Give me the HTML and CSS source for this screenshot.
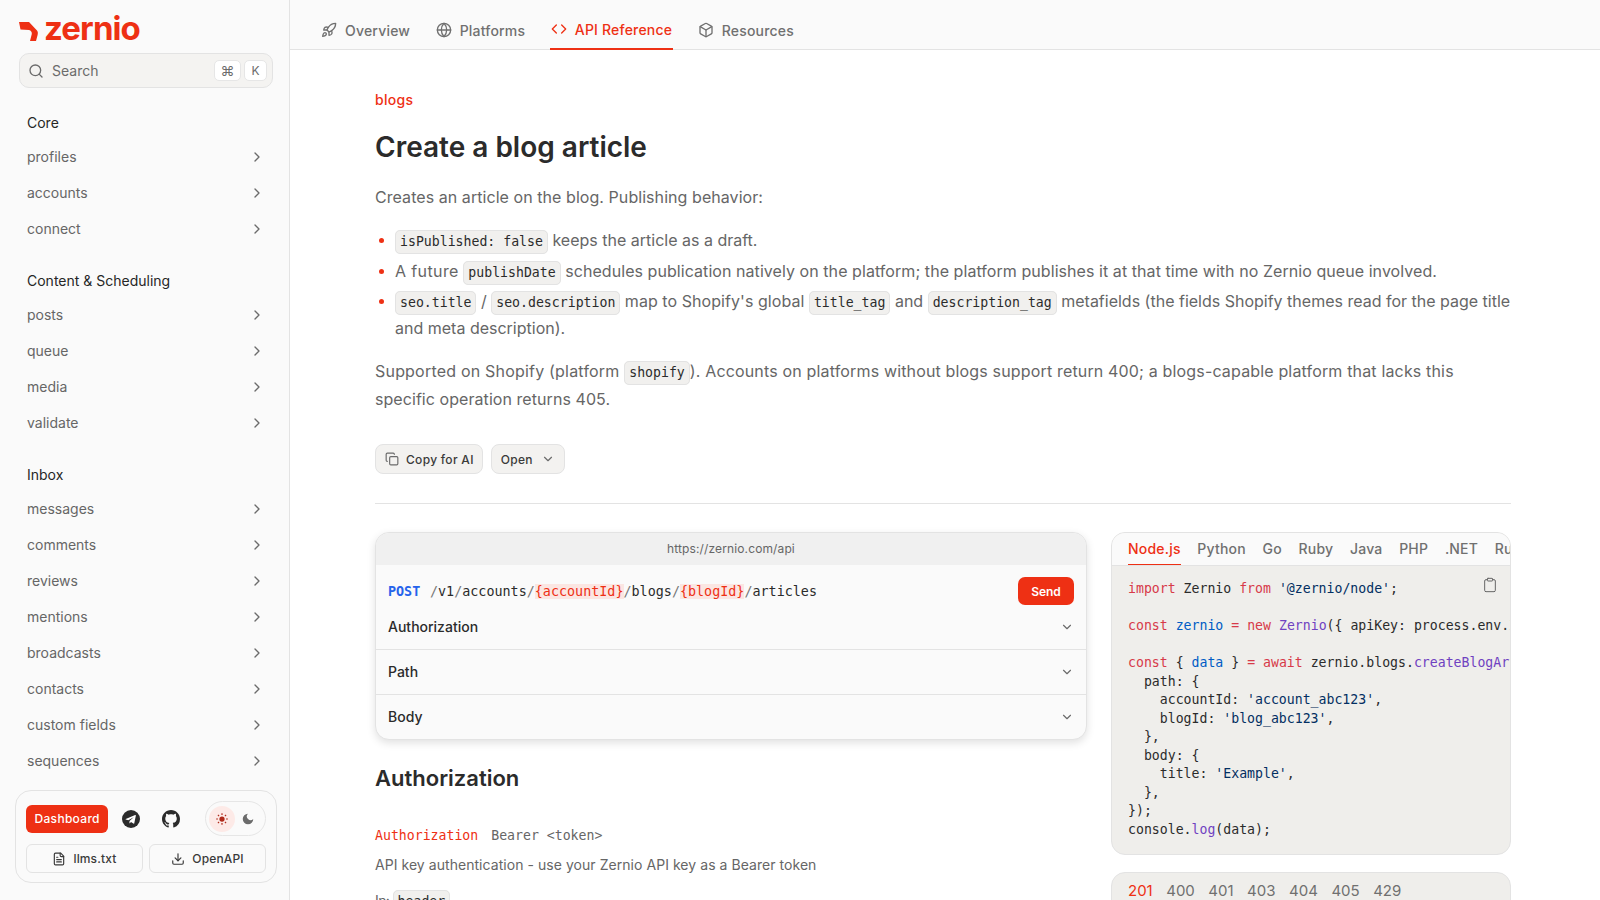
FILE: index.html
```html
<!DOCTYPE html>
<html lang="en">
<head>
    <meta charset="UTF-8">
    <title>Create a blog article</title>
    <link rel="stylesheet" href="styles.css">
</head>
<body>
    <!-- Shared icons -->
    <svg class="sprite" aria-hidden="true">
        <symbol id="chev-right" viewBox="0 0 24 24"><path d="m9 18 6-6-6-6"/></symbol>
        <symbol id="chev-down" viewBox="0 0 24 24"><path d="m6 9 6 6 6-6"/></symbol>
    </svg>

    <div class="page">
        <!-- Sidebar -->
        <aside class="sidebar">
            <div class="logo">
                <svg class="logo-mark" viewBox="0 0 19 19"><path d="M0 0h10l8 8.500c1 1.500 1 2.500.6 4.500L17 19h-6l1.800-7c.2-2-.8-3.500-2.800-4l-8.500-.5z"/></svg>
                <span class="logo-text">zernio</span>
            </div>
            <div class="search">
                <svg class="icon search-icon" viewBox="0 0 24 24"><circle cx="11" cy="11" r="8"/><path d="m21 21-4.300-4.300"/></svg>
                <span class="search-label">Search</span>
                <kbd class="key key-cmd">⌘</kbd>
                <kbd class="key">K</kbd>
            </div>

            <nav class="side-nav">
                <div class="side-title">Core</div>
                <a class="side-item">profiles<svg class="chev"><use href="#chev-right"/></svg></a>
                <a class="side-item">accounts<svg class="chev"><use href="#chev-right"/></svg></a>
                <a class="side-item">connect<svg class="chev"><use href="#chev-right"/></svg></a>

                <div class="side-title">Content &amp; Scheduling</div>
                <a class="side-item">posts<svg class="chev"><use href="#chev-right"/></svg></a>
                <a class="side-item">queue<svg class="chev"><use href="#chev-right"/></svg></a>
                <a class="side-item">media<svg class="chev"><use href="#chev-right"/></svg></a>
                <a class="side-item">validate<svg class="chev"><use href="#chev-right"/></svg></a>

                <div class="side-title">Inbox</div>
                <a class="side-item">messages<svg class="chev"><use href="#chev-right"/></svg></a>
                <a class="side-item">comments<svg class="chev"><use href="#chev-right"/></svg></a>
                <a class="side-item">reviews<svg class="chev"><use href="#chev-right"/></svg></a>
                <a class="side-item">mentions<svg class="chev"><use href="#chev-right"/></svg></a>
                <a class="side-item">broadcasts<svg class="chev"><use href="#chev-right"/></svg></a>
                <a class="side-item">contacts<svg class="chev"><use href="#chev-right"/></svg></a>
                <a class="side-item">custom fields<svg class="chev"><use href="#chev-right"/></svg></a>
                <a class="side-item">sequences<svg class="chev"><use href="#chev-right"/></svg></a>
            </nav>

            <div class="side-card">
                <div class="card-row">
                    <a class="dash-btn">Dashboard</a>
                    <svg class="brand brand-tg" viewBox="0 0 16 16"><circle cx="8" cy="8" r="8" fill="#2b2b2b"/><path fill="#fff" d="M3.300 7.900 11.700 4.500c.4-.1.700.1.600.600l-1.400 6.600c-.1.500-.4.600-.8.400L8 10.700l-1 1c-.2.200-.4.200-.4-.1l.1-1.800 3.400-3.100c.2-.2 0-.2-.2-.1L5.600 9.100 3.400 8.400c-.4-.1-.4-.4-.1-.5z"/></svg>
                    <svg class="brand brand-gh" viewBox="0 0 16 16"><path fill="#2b2b2b" d="M8 0C3.580 0 0 3.580 0 8c0 3.540 2.290 6.530 5.470 7.590.4.070.55-.17.55-.38 0-.19-.01-.82-.01-1.490-2.010.37-2.530-.49-2.690-.94-.09-.23-.48-.94-.82-1.130-.28-.15-.68-.52-.01-.53.63-.01 1.080.58 1.230.82.72 1.210 1.870.87 2.330.66.07-.52.28-.87.51-1.070-1.780-.2-3.640-.89-3.640-3.950 0-.87.31-1.590.82-2.150-.08-.2-.36-1.020.08-2.120 0 0 .67-.21 2.200.82.64-.18 1.320-.27 2-.27s1.360.09 2 .27c1.530-1.040 2.200-.82 2.200-.82.44 1.100.16 1.920.08 2.120.51.56.82 1.270.82 2.150 0 3.070-1.870 3.750-3.650 3.950.29.25.54.73.54 1.480 0 1.070-.01 1.930-.01 2.200 0 .21.15.46.55.38A8.010 8.010 0 0 0 16 8c0-4.420-3.580-8-8-8"/></svg>
                    <div class="theme-toggle">
                        <span class="theme-sun">
                            <svg viewBox="0 0 24 24"><circle cx="12" cy="12" r="4.500" fill="#b02a1a" stroke="none"/><path d="M12 2v3M12 19v3M2 12h3M19 12h3M5 5l2 2M17 17l2 2M5 19l2-2M17 7l2-2"/></svg>
                        </span>
                        <svg class="theme-moon" viewBox="0 0 24 24"><path d="M12 3a6 6 0 0 0 9 9 9 9 0 1 1-9-9z"/></svg>
                    </div>
                </div>
                <div class="card-row card-links">
                    <a class="link-btn">
                        <svg class="icon" viewBox="0 0 24 24"><path d="M15 2H6a2 2 0 0 0-2 2v16a2 2 0 0 0 2 2h12a2 2 0 0 0 2-2V7Z"/><path d="M14 2v4a2 2 0 0 0 2 2h4"/><path d="M10 9H8"/><path d="M16 13H8"/><path d="M16 17H8"/></svg>
                        llms.txt
                    </a>
                    <a class="link-btn">
                        <svg class="icon" viewBox="0 0 24 24"><path d="M21 15v4a2 2 0 0 1-2 2H5a2 2 0 0 1-2-2v-4"/><path d="m7 10 5 5 5-5"/><path d="M12 15V3"/></svg>
                        OpenAPI
                    </a>
                </div>
            </div>
        </aside>

        <div class="main">
            <!-- Top tabs -->
            <header class="topnav">
                <a class="top-tab">
                    <svg class="icon" viewBox="0 0 24 24"><path d="M4.500 16.500c-1.500 1.260-2 5-2 5s3.740-.5 5-2c.71-.84.7-2.130-.09-2.910a2.180 2.180 0 0 0-2.910-.09z"/><path d="m12 15-3-3a22 22 0 0 1 2-3.950A12.880 12.880 0 0 1 22 2c0 2.720-.78 7.500-6 11a22.350 22.350 0 0 1-4 2z"/><path d="M9 12H4s.55-3.030 2-4c1.620-1.080 5 0 5 0"/><path d="M12 15v5s3.030-.55 4-2c1.080-1.620 0-5 0-5"/></svg>
                    Overview
                </a>
                <a class="top-tab">
                    <svg class="icon" viewBox="0 0 24 24"><circle cx="12" cy="12" r="10"/><path d="M12 2a14.500 14.500 0 0 0 0 20 14.500 14.500 0 0 0 0-20"/><path d="M2 12h20"/></svg>
                    Platforms
                </a>
                <a class="top-tab active">
                    <svg class="icon" viewBox="0 0 24 24"><path d="m16 18 6-6-6-6"/><path d="m8 6-6 6 6 6"/></svg>
                    API Reference
                </a>
                <a class="top-tab">
                    <svg class="icon" viewBox="0 0 24 24"><path d="M21 8a2 2 0 0 0-1-1.730l-7-4a2 2 0 0 0-2 0l-7 4A2 2 0 0 0 3 8v8a2 2 0 0 0 1 1.730l7 4a2 2 0 0 0 2 0l7-4A2 2 0 0 0 21 16Z"/><path d="m3.300 7 8.700 5 8.700-5"/><path d="M12 22V12"/></svg>
                    Resources
                </a>
            </header>

            <main class="content">
                <div class="eyebrow">blogs</div>
                <h1>Create a blog article</h1>
                <p class="lead">Creates an article on the blog. Publishing behavior:</p>
                <ul class="notes">
                    <li><code>isPublished: false</code> keeps the article as a draft.</li>
                    <li class="wide"><span class="wider">A future</span> <code>publishDate</code> schedules publication natively on the platform; the platform publishes it at that time with no Zernio queue involved.</li>
                    <li><code>seo.title</code> / <code>seo.description</code> <span class="wide">map to Shopify's global</span> <code>title_tag</code> and <code>description_tag</code> metafields (the fields Shopify themes read for the page title<br>and meta description).</li>
                </ul>
                <p class="support"><span class="support-start">Supported on Shopify (platform</span> <code>shopify</code>). Accounts on platforms without blogs support return 400; a blogs-capable platform that lacks this<br><span class="support-end">specific operation returns 405.</span></p>

                <div class="actions">
                    <button class="action-btn">
                        <svg class="icon" viewBox="0 0 24 24"><rect x="8" y="8" width="14" height="14" rx="2"/><path d="M4 16c-1.100 0-2-.9-2-2V4c0-1.100.9-2 2-2h10c1.100 0 2 .9 2 2"/></svg>
                        Copy for AI
                    </button>
                    <button class="action-btn open-btn">
                        Open
                        <svg class="chev-sm"><use href="#chev-down"/></svg>
                    </button>
                </div>
                <hr class="rule">

                <div class="columns">
                    <section class="col-left">
                        <div class="api-card">
                            <div class="api-url">https://zernio.com/api</div>
                            <div class="api-route">
                                <span class="method">POST</span>
                                <span class="route"><i>/</i>v1<i>/</i>accounts<i>/</i><b>{accountId}</b><i>/</i>blogs<i>/</i><b>{blogId}</b><i>/</i>articles</span>
                                <button class="send-btn">Send</button>
                            </div>
                            <div class="api-row first">Authorization<svg class="chev-sm"><use href="#chev-down"/></svg></div>
                            <div class="api-row">Path<svg class="chev-sm"><use href="#chev-down"/></svg></div>
                            <div class="api-row">Body<svg class="chev-sm"><use href="#chev-down"/></svg></div>
                        </div>

                        <h2>Authorization</h2>
                        <div class="param">
                            <span class="param-name">Authorization</span>
                            <span class="param-type">Bearer &lt;token&gt;</span>
                        </div>
                        <p class="param-desc">API key authentication - use your Zernio API key as a Bearer token</p>
                        <p class="param-in">In: <code>header</code></p>
                    </section>

                    <section class="col-right">
                        <div class="code-card">
                            <div class="code-tabs">
                                <span class="code-tab active">Node.js</span>
                                <span class="code-tab">Python</span>
                                <span class="code-tab">Go</span>
                                <span class="code-tab">Ruby</span>
                                <span class="code-tab">Java</span>
                                <span class="code-tab">PHP</span>
                                <span class="code-tab">.NET</span>
                                <span class="code-tab">Rust</span>
                            </div>
                            <div class="code-body">
                                <svg class="icon copy-code" viewBox="0 0 24 24"><rect x="8" y="2" width="8" height="4" rx="1"/><path d="M16 4h2a2 2 0 0 1 2 2v14a2 2 0 0 1-2 2H6a2 2 0 0 1-2-2V6a2 2 0 0 1 2-2h2"/></svg>
<pre><span class="kw">import</span> Zernio <span class="kw">from</span> <span class="str">'@zernio/node'</span>;

<span class="kw">const</span> <span class="var">zernio</span> <span class="kw">=</span> <span class="kw">new</span> <span class="fn">Zernio</span>({ apiKey: process.env.ZERNIO_API_KEY });

<span class="kw">const</span> { <span class="var">data</span> } <span class="kw">=</span> <span class="kw">await</span> zernio.blogs.<span class="fn">createBlogArticle</span>({
  path: {
    accountId: <span class="str">'account_abc123'</span>,
    blogId: <span class="str">'blog_abc123'</span>,
  },
  body: {
    title: <span class="str">'Example'</span>,
  },
});
console.<span class="fn">log</span>(data);</pre>
                            </div>
                        </div>

                        <div class="resp-card">
                            <span class="resp-tab active">201</span>
                            <span class="resp-tab">400</span>
                            <span class="resp-tab">401</span>
                            <span class="resp-tab">403</span>
                            <span class="resp-tab">404</span>
                            <span class="resp-tab">405</span>
                            <span class="resp-tab">429</span>
                        </div>
                    </section>
                </div>
            </main>
        </div>
    </div>
</body>
</html>
```

FILE: styles.css
```css
/* General */
* {
    box-sizing: border-box;
}

html, body {
    margin: 0;
    height: 900px;
    overflow: hidden;
}

body {
    font-family: Inter, 'Noto Sans', sans-serif;
    color: #666;
    background: #fafafa;
}

.sprite {
    display: none;
}

.page {
    display: flex;
    height: 900px;
}

.icon {
    width: 16px;
    height: 16px;
    flex: none;
    fill: none;
    stroke: currentColor;
    stroke-width: 2;
    stroke-linecap: round;
    stroke-linejoin: round;
}

/* Sidebar */
.sidebar {
    width: 290px;
    flex: none;
    display: flex;
    flex-direction: column;
    padding: 15px 0 0;
    background: #fafafa;
    border-right: 1px solid #e3e3e3;
}

.logo {
    display: flex;
    align-items: flex-end;
    gap: 6px;
    height: 28px;
    padding-left: 19px;
}

.logo-mark {
    width: 19px;
    height: 19px;
    margin-bottom: 2px;
    fill: #ee3014;
}

.logo-text {
    font-size: 33px;
    font-weight: 700;
    line-height: 28px;
    letter-spacing: -0.9px;
    color: #ee3014;
    position: relative;
    top: -1px;
}

.search {
    display: flex;
    align-items: center;
    height: 35px;
    margin: 10px 16px 0 19px;
    padding: 0 5px 0 8px;
    font-size: 14px;
    color: #6b6b6b;
    background: #f4f3f1;
    border: 1px solid #e3e3e3;
    border-radius: 10px;
}

.search-label {
    flex: 1;
    margin-left: 8px;
}

.key {
    display: flex;
    align-items: center;
    justify-content: center;
    width: 23px;
    height: 21px;
    font-family: Inter, sans-serif;
    font-size: 12px;
    background: #fff;
    border: 1px solid #e6e6e6;
    border-radius: 5px;
}

.key-cmd {
    width: 27px;
    margin-right: 3px;
    font-size: 14px;
}

.side-nav {
    flex: 1;
    padding: 16px 0 0 27px;
    overflow: hidden;
}

.side-title {
    display: flex;
    align-items: center;
    height: 34px;
    margin-top: 16px;
    padding-top: 3px;
    font-size: 14px;
    color: #262626;
}

.side-title:first-child {
    margin-top: 0;
}

.side-item {
    display: flex;
    align-items: center;
    justify-content: space-between;
    height: 36px;
    padding: 0 24px 0 0;
    font-size: 14px;
    color: #666;
}

.chev {
    width: 16px;
    height: 16px;
    margin-top: 1px;
    fill: none;
    stroke: #6b6b6b;
    stroke-width: 2;
    stroke-linecap: round;
    stroke-linejoin: round;
}

.side-card {
    flex: none;
    width: 262px;
    height: 93px;
    margin: 0 0 17px 15px;
    padding: 10px 10px 0;
    background: #fafafa;
    border: 1px solid #e3e3e3;
    border-radius: 16px;
}

.card-row {
    display: flex;
    align-items: center;
}

.dash-btn {
    width: 83px;
    height: 28px;
    font-size: 12px;
    font-weight: 500;
    line-height: 28px;
    letter-spacing: 0.3px;
    text-align: center;
    color: #fff;
    background: #ee3014;
    border-radius: 6px;
}

.brand {
    width: 18px;
    height: 18px;
    flex: none;
}

.brand-tg {
    margin-left: 14px;
}

.brand-gh {
    margin-left: 22px;
}

.theme-toggle {
    display: flex;
    align-items: center;
    width: 61px;
    height: 35px;
    margin-left: 25px;
    padding-left: 3px;
    border: 1px solid #e6e6e6;
    border-radius: 18px;
}

.theme-sun {
    display: flex;
    align-items: center;
    justify-content: center;
    width: 26px;
    height: 26px;
    background: #fdeae7;
    border-radius: 50%;
}

.theme-sun svg {
    width: 14px;
    height: 14px;
    fill: none;
    stroke: #b02a1a;
    stroke-width: 2;
}

.theme-moon {
    width: 14px;
    height: 14px;
    margin-left: 6px;
    fill: #6b6b6b;
}

.card-links {
    gap: 6px;
    margin-top: 8px;
}

.link-btn {
    display: flex;
    align-items: center;
    justify-content: center;
    gap: 7px;
    width: 117px;
    height: 29px;
    font-size: 12px;
    font-weight: 500;
    letter-spacing: 0.15px;
    color: #3a3a3a;
    border: 1px solid #e3e3e3;
    border-radius: 6px;
}

.link-btn .icon {
    width: 14px;
    height: 14px;
}

/* Top tabs */
.main {
    flex: 1;
    min-width: 0;
    display: flex;
    flex-direction: column;
}

.topnav {
    flex: none;
    display: flex;
    gap: 23.5px;
    height: 50px;
    padding-left: 30px;
    background: #fafafa;
    border-bottom: 1px solid #e3e3e3;
}

.top-tab {
    display: flex;
    align-items: center;
    gap: 8px;
    height: 50px;
    padding: 10px 1px 0;
    font-size: 14px;
    font-weight: 500;
    letter-spacing: 0.2px;
    color: #707070;
}

.top-tab.active {
    color: #ee3014;
    border-bottom: 2px solid #ee3014;
}

/* Article */
.content {
    flex: 1;
    overflow: hidden;
    padding: 40px 89px 0 85px;
    background: #fff;
}

.eyebrow {
    font-size: 14px;
    font-weight: 500;
    line-height: 20px;
    letter-spacing: 0.3px;
    color: #ee3014;
}

h1 {
    margin: 19px 0 0;
    font-size: 28px;
    font-weight: 600;
    line-height: 36px;
    color: #2b2b2b;
}

.lead {
    margin: 18px 0 0;
    font-size: 16px;
    line-height: 28px;
    letter-spacing: 0.06px;
}

.notes {
    margin: 16px 0 0;
    padding: 0 0 0 20px;
    font-size: 16px;
    line-height: 27px;
    list-style: none;
}

.notes li {
    position: relative;
    margin-bottom: 3px;
}

.notes li:first-child {
    margin-bottom: 4px;
}

.notes .wide {
    letter-spacing: 0.06px;
}

.notes .wider {
    letter-spacing: 0.38px;
}

.notes li::before {
    content: "";
    position: absolute;
    left: -16px;
    top: 11px;
    width: 5px;
    height: 5px;
    background: #ee3014;
    border-radius: 50%;
}

code {
    padding: 3px 4px 4px;
    font-family: 'DejaVu Sans Mono', 'Liberation Mono', monospace;
    font-size: 13.2px;
    line-height: 18px;
    letter-spacing: 0;
    color: #2b2b2b;
    background: #f1f0ee;
    border: 1px solid #e3e3e3;
    border-radius: 5px;
}

.support {
    margin: 15px 0 0;
    font-size: 16px;
    line-height: 28px;
    letter-spacing: 0.16px;
}

.support-start {
    letter-spacing: 0.2px;
}

.support-end {
    letter-spacing: 0.06px;
}

.actions {
    display: flex;
    gap: 8px;
    margin-top: 31px;
}

.action-btn {
    display: flex;
    align-items: center;
    gap: 7px;
    height: 30px;
    padding: 0 8px 0 9px;
    font-family: inherit;
    font-size: 12px;
    font-weight: 500;
    letter-spacing: 0.3px;
    color: #3a3a3a;
    background: #f3f2f0;
    border: 1px solid #e3e3e3;
    border-radius: 8px;
}

.action-btn .icon {
    width: 14px;
    height: 14px;
    color: #6b6b6b;
}

.open-btn {
    gap: 8px;
    padding: 0 9px;
}

.chev-sm {
    width: 14px;
    height: 14px;
    flex: none;
    fill: none;
    stroke: #6b6b6b;
    stroke-width: 2;
    stroke-linecap: round;
    stroke-linejoin: round;
}

.rule {
    height: 1px;
    margin: 29px 0 0;
    background: #e3e3e3;
    border: 0;
}

/* Two columns */
.columns {
    display: flex;
    gap: 24px;
    margin-top: 28px;
}

.col-left {
    width: 712px;
    flex: none;
}

.col-right {
    flex: 1;
    min-width: 0;
}

/* Request card */
.api-card {
    height: 208px;
    overflow: hidden;
    background: #fafafa;
    border: 1px solid #e3e3e3;
    border-radius: 14px;
    box-shadow: 0 3px 8px rgba(0, 0, 0, 0.12);
}

.api-url {
    height: 32px;
    font-size: 12px;
    line-height: 32px;
    letter-spacing: 0.12px;
    text-align: center;
    color: #666;
    background: #f0f0f0;
}

.api-route {
    display: flex;
    align-items: center;
    height: 28px;
    margin-top: 12px;
    padding: 0 12px;
    font-family: 'DejaVu Sans Mono', 'Liberation Mono', monospace;
    font-size: 13.4px;
}

.method {
    width: 42px;
    font-weight: 700;
    color: #2563eb;
}

.route {
    flex: 1;
    color: #2b2b2b;
}

.route i {
    font-style: normal;
    color: #777;
}

.route b {
    font-weight: 400;
    color: #ee3014;
    background: #fbe6e2;
}

.send-btn {
    width: 56px;
    height: 28px;
    font-family: Inter, sans-serif;
    font-size: 12px;
    font-weight: 600;
    color: #fff;
    background: #ee3014;
    border: 0;
    border-radius: 7px;
}

.api-row {
    display: flex;
    align-items: center;
    justify-content: space-between;
    height: 45px;
    padding: 0 12px 1px;
    font-size: 14px;
    font-weight: 500;
    color: #2b2b2b;
    border-top: 1px solid #e3e3e3;
}

.api-row.first {
    height: 44px;
    border-top: 0;
}

h2 {
    margin: 22px 0 0;
    font-size: 22px;
    font-weight: 600;
    line-height: 32px;
    color: #2b2b2b;
}

.param {
    display: flex;
    gap: 13px;
    margin-top: 32px;
    font-family: 'DejaVu Sans Mono', 'Liberation Mono', monospace;
    font-size: 13.2px;
    line-height: 20px;
}

.param-name {
    font-weight: 500;
    color: #ee3014;
}

.param-desc {
    margin: 9px 0 0;
    font-size: 14px;
    line-height: 20px;
    letter-spacing: 0.05px;
}

.param-in {
    margin: 16px 0 0;
    font-size: 14px;
    line-height: 20px;
    letter-spacing: -0.6px;
}

/* Code samples */
.code-card {
    height: 323px;
    overflow: hidden;
    background: #efeeeb;
    border: 1px solid #e3e3e3;
    border-radius: 14px;
}

.code-tabs {
    display: flex;
    gap: 16.7px;
    height: 33px;
    padding: 0 16px;
    overflow: hidden;
    background: #fafafa;
    border-bottom: 1px solid #e3e3e3;
}

.code-tab {
    height: 32px;
    font-size: 14px;
    font-weight: 500;
    line-height: 32px;
    letter-spacing: 0.2px;
    color: #707070;
}

.code-tab.active {
    color: #ee3014;
    border-bottom: 1px solid #ee3014;
}

.code-body {
    position: relative;
    padding: 14px 16px;
    overflow: hidden;
}

.code-body pre {
    margin: 0;
    font-family: 'DejaVu Sans Mono', 'Liberation Mono', monospace;
    font-size: 13.2px;
    line-height: 18.5px;
    color: #2b2b2b;
}

.copy-code {
    position: absolute;
    top: 11px;
    right: 12px;
    color: #666;
    stroke-width: 1.5;
    background: #efeeeb;
}

.kw {
    color: #d73a49;
}

.str {
    color: #032f62;
}

.var {
    color: #005cc5;
}

.fn {
    color: #6f42c1;
}

/* Response tabs */
.resp-card {
    display: flex;
    gap: 13.5px;
    height: 60px;
    margin-top: 17px;
    padding: 7px 16px 0;
    font-size: 15px;
    line-height: 22px;
    color: #707070;
    background: #efeeeb;
    border: 1px solid #e3e3e3;
    border-radius: 14px;
}

.resp-tab.active {
    color: #ee3014;
}
```
